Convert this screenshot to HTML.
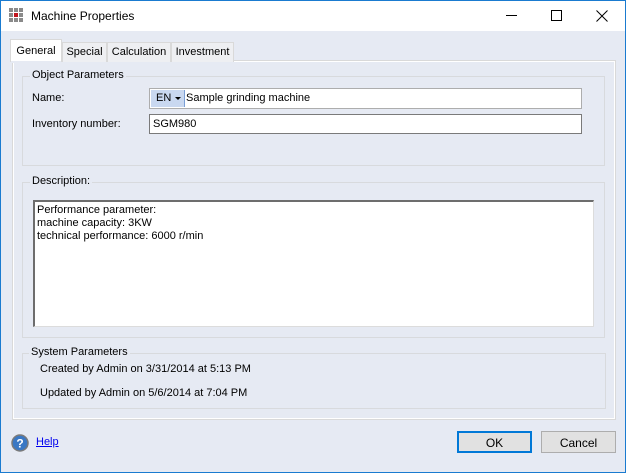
<!DOCTYPE html>
<html><head><style>
*{box-sizing:border-box;margin:0;padding:0}
body{width:626px;height:473px;overflow:hidden;font-family:"Liberation Sans",sans-serif;font-size:11px;color:#000;background:#e6eaf3}
.a{position:absolute}
#win{position:absolute;left:0;top:0;width:626px;height:473px;border:1px solid #1a7bd0;background:#e6eaf3}
#title{left:0;top:0;width:624px;height:30px;background:#fff}
.tab{position:absolute;top:41px;height:20px;border:1px solid #d9d9d9;border-bottom:none;background:#eeeff2;padding-top:3px;text-align:center}
.grp{position:absolute;border:1px solid #d8dadd}
.lg{position:absolute;background:#e6eaf3;padding:0 2px;top:-8px;left:7px}
.inp{position:absolute;background:#fff}
.btn{position:absolute;background:#e1e1e1;border:1px solid #adadad;text-align:center;padding-top:4px;font-size:12px}
</style></head><body>
<div id="win">
<div id="title" class="a">
 <svg class="a" style="left:8px;top:7px" width="15" height="15">
  <g fill="#8a8a8a"><rect x="0" y="0" width="4" height="4"/><rect x="5" y="0" width="4" height="4"/><rect x="10" y="0" width="4" height="4"/><rect x="0" y="5" width="4" height="4"/><rect x="10" y="5" width="4" height="4"/><rect x="0" y="10" width="4" height="4"/><rect x="5" y="10" width="4" height="4"/><rect x="10" y="10" width="4" height="4"/></g>
  <rect x="5" y="5" width="4" height="4" fill="#c0141e"/>
 </svg>
 <div class="a" style="left:30px;top:8px;font-size:12px">Machine Properties</div>
 <div class="a" style="left:505px;top:14px;width:11px;height:1px;background:#000"></div>
 <div class="a" style="left:550px;top:9px;width:11px;height:11px;border:1px solid #000"></div>
 <svg class="a" style="left:595px;top:9px" width="12" height="12"><path d="M0.5 0.5L11.5 11.5M11.5 0.5L0.5 11.5" stroke="#000" stroke-width="1"/></svg>
</div>
<div class="a" style="left:11px;top:59px;width:604px;height:360px;border:1px solid #d9d9d9;background:#fff"></div>
<div class="a" style="left:13px;top:61px;width:600px;height:356px;background:#e6eaf3"></div>
<div class="tab" style="left:61px;width:45px">Special</div>
<div class="tab" style="left:106px;width:64px">Calculation</div>
<div class="tab" style="left:170px;width:63px">Investment</div>
<div class="tab" style="left:9px;top:38px;width:52px;height:23px;background:#fff;padding-top:5px">General</div>
<div class="a" style="left:10px;top:60px;width:50px;height:2px;background:#e6eaf3"></div>

<div class="grp" style="left:21px;top:75px;width:583px;height:90px"><div class="lg">Object Parameters</div></div>
<div class="a" style="left:31px;top:91px">Name:</div>
<div class="inp" style="left:148px;top:87px;width:433px;height:21px;border:1px solid #adadad"></div>
<div class="a" style="left:150px;top:89px;width:34px;height:17px;background:#c9d8f0;border-right:1px solid #7a9fd6;padding:2px 0 0 5px">EN</div>
<svg class="a" style="left:174px;top:96px" width="6" height="4"><path d="M0 0H6L3 3Z" fill="#000"/></svg>
<div class="a" style="left:185px;top:91px">Sample grinding machine</div>
<div class="a" style="left:31px;top:117px">Inventory number:</div>
<div class="inp" style="left:148px;top:113px;width:433px;height:20px;border:1px solid #7a7a7a;padding:3px 0 0 3px">SGM980</div>

<div class="grp" style="left:21px;top:181px;width:583px;height:156px"><div class="lg">Description:</div></div>
<div class="inp" style="left:32px;top:199px;width:561px;height:127px;border:1px solid #dcdcdc;border-top:2px solid #6d6d6d;border-left:2px solid #6d6d6d;padding:2px 0 0 2px;line-height:13px">Performance parameter:<br>machine capacity: 3KW<br>technical performance: 6000 r/min</div>

<div class="grp" style="left:21px;top:352px;width:584px;height:56px"><div class="lg" style="left:6px">System Parameters</div></div>
<div class="a" style="left:39px;top:362px">Created by Admin on 3/31/2014 at 5:13 PM</div>
<div class="a" style="left:39px;top:386px">Updated by Admin on 5/6/2014 at 7:04 PM</div>

<svg class="a" style="left:10px;top:433px" width="18" height="18"><circle cx="9" cy="9" r="8" fill="#3a78c4" stroke="#7a7a7a" stroke-width="1.5"/><text x="9" y="13.5" text-anchor="middle" font-family="Liberation Sans" font-weight="bold" font-size="12" fill="#fff">?</text></svg>
<div class="a" style="left:35px;top:435px;color:#0000ee;text-decoration:underline">Help</div>
<div class="btn" style="left:456px;top:430px;width:75px;height:22px;border:2px solid #0078d7;padding-top:3px">OK</div>
<div class="btn" style="left:540px;top:430px;width:75px;height:22px">Cancel</div>
</div>
</body></html>
